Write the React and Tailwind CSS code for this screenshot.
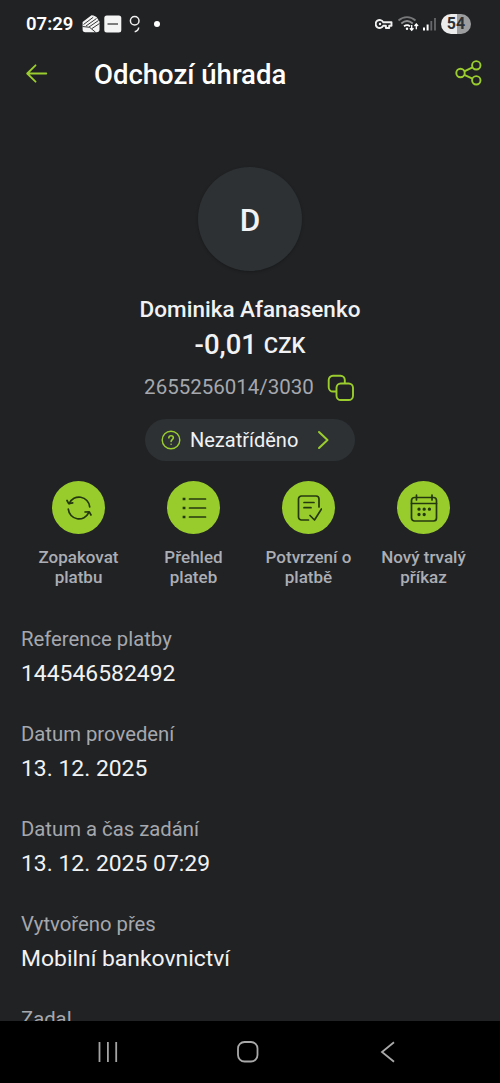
import React from 'react';

const details = [
  { label: 'Reference platby', value: '144546582492' },
  { label: 'Datum provedení', value: '13. 12. 2025' },
  { label: 'Datum a čas zadání', value: '13. 12. 2025 07:29' },
  { label: 'Vytvořeno přes', value: 'Mobilní bankovnictví' },
  { label: 'Zadal' },
];

const RepeatIcon = () => (
  <svg width="26" height="26" viewBox="0 0 26 26" fill="none" stroke="#24380f" strokeWidth="1.7" strokeLinecap="round" strokeLinejoin="round">
    <path d="M3.300 8.400A10.700 10.700 0 0 1 23.700 11.800" />
    <path d="M1 5.500l1.700 3.200 4-.9" />
    <path d="M22.700 17.600A10.700 10.700 0 0 1 2.300 14.200" />
    <path d="M25 20l-1.700-3.200-4.300.2" />
  </svg>
);

const ListIcon = () => (
  <svg width="26" height="26" viewBox="0 0 26 26" fill="none" stroke="#24380f" strokeWidth="1.7" strokeLinecap="round">
    <path d="M8.500 4h16M8.500 13h16M8.500 22h16" />
    <path d="M3 4h.1M3 13h.1M3 22h.1" strokeWidth="2.700" strokeLinecap="square" />
  </svg>
);

const ConfirmIcon = () => (
  <svg width="26" height="26" viewBox="0 0 26 26" fill="none" stroke="#24380f" strokeWidth="1.7" strokeLinecap="round" strokeLinejoin="round">
    <path d="M12.500 25H5.500a3 3 0 0 1-3-3V4a3 3 0 0 1 3-3h14.500a3 3 0 0 1 3 3v8" />
    <path d="M8 7.500h10M8 12.700h7" />
    <path d="M14 20.500l4.500 4.500 7-11" />
  </svg>
);

const CalendarIcon = () => (
  <svg width="28" height="28" viewBox="0 0 28 28" fill="none" stroke="#24380f" strokeWidth="1.7" strokeLinecap="round" strokeLinejoin="round">
    <rect x="1.500" y="3.500" width="25" height="23.500" rx="3" />
    <path d="M1.500 9.500h25M6.500 1v5M22 1v5" />
    <path d="M9 15.200h.01M14.200 15.200h.01M19.400 15.200h.01M9 20.500h.01M14.200 20.500h.01" strokeWidth="3.300" />
  </svg>
);

const actions = [
  { first: 'Zopakovat', second: 'platbu', icon: <RepeatIcon /> },
  { first: 'Přehled', second: 'plateb', icon: <ListIcon /> },
  { first: 'Potvrzení o', second: 'platbě', icon: <ConfirmIcon /> },
  { first: 'Nový trvalý', second: 'příkaz', icon: <CalendarIcon /> },
];

function StatusBar() {
  return (
    <div className="flex h-12 shrink-0 items-center justify-between pl-[26px] pr-[29px]">
      <div className="flex items-center">
        <span className="w-[56px] pt-px text-[18.5px] font-semibold text-white">07:29</span>
        {/* notifications */}
        <svg width="82" height="20" viewBox="0 0 82 20" fill="none">
          <path d="M.6 8L9.500 1.300l2 .2 3 1.600 3 4.500v8a2.700 2.700 0 0 1-2.700 2.700H3.300A2.700 2.700 0 0 1 .6 15.600z" fill="#f4f4f4" />
          <path d="M1.500 10.500l9.700-7.200M4 12L14.500 4.500M7 13l9.500-6.500M.6 12.500l7 .8 6 5M10 14.500l7.500-5" stroke="#212224" strokeWidth=".9" />
          <rect x="22.300" y="1.500" width="17" height="17" rx="2.500" fill="#f4f4f4" />
          <path d="M25.500 10h10.500" stroke="#4a4a4a" strokeWidth="1.400" />
          <circle cx="52.700" cy="6.700" r="4.300" stroke="#f0f0f0" strokeWidth="1.500" />
          <path d="M56.700 13.500c-.2 2-1.500 3.600-4 4.200" stroke="#f0f0f0" strokeWidth="1.500" />
          <circle cx="75" cy="10" r="3" fill="#fff" />
        </svg>
      </div>
      <div className="flex items-center">
        <svg width="66" height="20" viewBox="0 0 66 20" fill="none">
          <path d="M8.300 8.300A4 4 0 1 0 8.300 11.700h2.600v2.300h3.300v-2.300h2.300V8.300z" stroke="#f0f0f0" strokeWidth="1.900" strokeLinejoin="round" />
          <circle cx="5" cy="10" r="1.200" fill="#f0f0f0" />
          <path d="M23.500 6.500c5-4.500 12-4.500 17 0" stroke="#777879" strokeWidth="1.800" />
          <path d="M26.300 9.500c3.500-3 8-3 11.500 0" stroke="#8d8e8f" strokeWidth="1.800" />
          <path d="M29 12.300c2-1.500 4.300-1.500 6 0" stroke="#fff" strokeWidth="1.800" />
          <circle cx="32" cy="14.700" r="1.200" fill="#fff" />
          <path d="M36.700 11v5M34.900 14.300l1.800 2 1.800-2M41.300 15.300v-5M39.500 12l1.800-2 1.800 2" stroke="#fff" strokeWidth="1.300" />
          <path d="M49 13.500v3" stroke="#fff" strokeWidth="2" />
          <path d="M52.600 10.500v6" stroke="#fff" strokeWidth="2" />
          <path d="M56.300 7v9.500M60 4v12.500" stroke="#66686a" strokeWidth="1.800" />
        </svg>
        <div className="flex h-5 w-[30px] items-center justify-center rounded-full bg-[linear-gradient(90deg,#ececec_54%,#9c9d9f_54%)] text-[16px] font-bold text-[#303133]">54</div>
      </div>
    </div>
  );
}

function App() {
  return (
    <div className="flex h-[1083px] w-[500px] flex-col overflow-hidden bg-[#212224] font-['Roboto',sans-serif] text-[#f1f2f4]">
      <StatusBar />
      <header className="flex h-[52px] shrink-0 items-center pl-[26px] pr-[18px]">
        <svg width="22" height="20" viewBox="0 0 22 20" fill="none" stroke="#9bcd2f" strokeWidth="1.800" strokeLinecap="round" strokeLinejoin="round">
          <path d="M20.300 9.500H1.300M9.500 1.300L1.200 9.500l8.300 8.200" />
        </svg>
        <h1 className="ml-[46px] pt-[2px] text-[27.5px] font-medium text-white">Odchozí úhrada</h1>
        <svg className="ml-auto" width="28" height="28" viewBox="0 0 28 28" fill="none" stroke="#9bcd2f" strokeWidth="1.900">
          <circle cx="6.500" cy="13" r="4.200" />
          <circle cx="22.300" cy="5.300" r="4.200" />
          <circle cx="22.300" cy="20.300" r="4.200" />
          <path d="M10.300 11.300l8.200-4M10.300 14.900l8.200 3.700" />
        </svg>
      </header>

      <main className="flex-1 overflow-hidden">
        <section className="flex flex-col items-center pt-[67px]">
          <div className="flex size-[104px] items-center justify-center rounded-full bg-[#2d3134] pt-[3px] text-[31.5px] font-medium shadow-[0_1px_3px_rgba(0,0,0,0.25)]">D</div>
          <h2 className="mt-[23px] text-[22.5px] leading-[30px] font-medium">Dominika Afanasenko</h2>
          <p className="mt-[4px] h-[34px] text-[27.5px] leading-[34px] font-medium">
            -0,01 <span className="align-[1px] text-[22px] leading-none">CZK</span>
          </p>
          <div className="mt-[10px] flex h-[30px] items-center gap-[13px] pr-[1px]">
            <span className="text-[20.5px] text-[#a5a8ae]">2655256014/3030</span>
            <svg className="mt-[2px]" width="28" height="28" viewBox="0 0 28 28" fill="none" stroke="#9bcd2f" strokeWidth="1.900" strokeLinejoin="round">
              <path d="M9 17.500H6a4.300 4.300 0 0 1-4.300-4.300V6A4.300 4.300 0 0 1 6 1.700h7.500A4.300 4.300 0 0 1 17.800 6v3" />
              <rect x="9.500" y="9.500" width="16.500" height="16.500" rx="4.300" />
            </svg>
          </div>
          <button className="mt-[17px] flex h-[42px] w-[210px] items-center rounded-full bg-[#2d3134] pl-[16px]">
            <svg width="20" height="20" viewBox="0 0 20 20" fill="none" stroke="#9bcd2f" strokeWidth="1.400" strokeLinecap="round">
              <circle cx="10" cy="10" r="8.800" />
              <path d="M7.800 7.900c.1-3 4.600-2.900 4.500-.1 0 1.700-2.200 1.800-2.200 3.600M10.100 14.200v.1" strokeWidth="1.600" />
            </svg>
            <span className="ml-[9px] w-[109px] text-left text-[20px] whitespace-nowrap">Nezatříděno</span>
            <svg className="ml-[17px]" width="14" height="20" viewBox="0 0 14 20" fill="none" stroke="#9bcd2f" strokeWidth="2" strokeLinecap="round" strokeLinejoin="round">
              <path d="M3 2l8.500 8L3 18" />
            </svg>
          </button>
        </section>

        <section className="mt-[20px] grid grid-cols-[repeat(4,115px)] pl-[21px]">
          {actions.map((a) => (
            <div key={a.first} className="flex flex-col items-center">
              <div className="flex size-[53px] items-center justify-center rounded-full bg-[#98cc2d]">{a.icon}</div>
              <p className="mt-[13px] text-center text-[17px] leading-[20px] font-medium whitespace-nowrap text-[#abaeb4]">
                {a.first}<br />{a.second}
              </p>
            </div>
          ))}
        </section>

        <section className="mt-[37px] pl-[21px]">
          {details.map((d) => (
            <div key={d.label} className="h-[95px]">
              <p className="text-[20.3px] leading-[30px] text-[#a5a8ae]">{d.label}</p>
              {d.value && <p className="mt-[4px] text-[22.9px] leading-[32px]">{d.value}</p>}
            </div>
          ))}
        </section>
      </main>

      {/* system navigation */}
      <nav className="flex h-[62px] shrink-0 items-center bg-black pl-[97px]">
        <svg width="22" height="22" viewBox="0 0 22 22" stroke="#a4a4a4" strokeWidth="1.800">
          <path d="M2.500 1v20M10.900 1v20M19.200 1v20" />
        </svg>
        <svg className="ml-[117px]" width="24" height="24" viewBox="0 0 24 24" fill="none" stroke="#a9a9a9" strokeWidth="1.800">
          <rect x="2" y="2" width="19.500" height="19.500" rx="6.500" />
        </svg>
        <svg className="ml-[119px]" width="18" height="22" viewBox="0 0 18 22" fill="none" stroke="#a9a9a9" strokeWidth="1.800">
          <path d="M15 1.200L3 11l12 9.800" />
        </svg>
      </nav>
    </div>
  );
}

export default App;
